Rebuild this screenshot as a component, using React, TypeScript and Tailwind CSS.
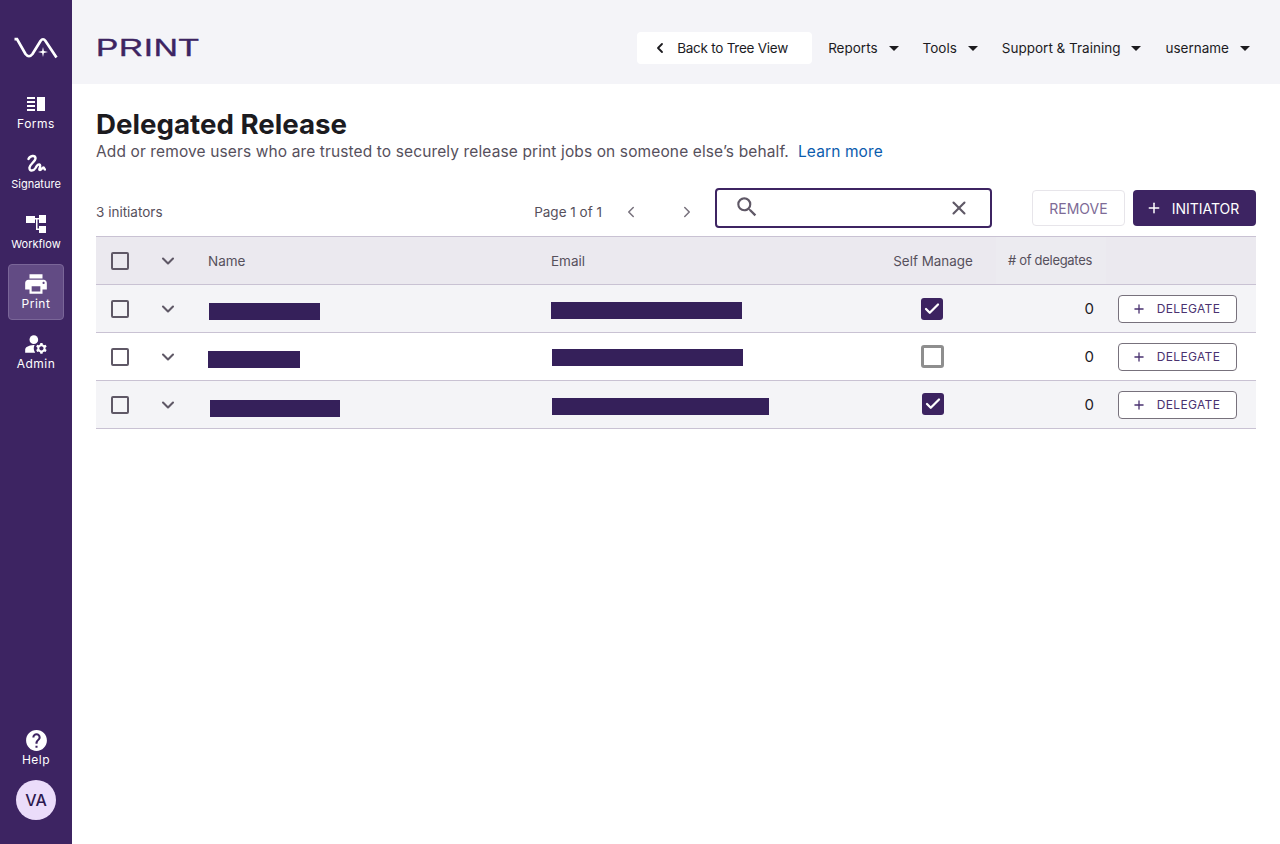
import { ChevronDown, ChevronLeft, ChevronRight, Plus, X, Check } from 'lucide-react'
import { MdPrint, MdHelp, MdManageAccounts, MdSearch } from 'react-icons/md'
import type { ReactNode } from 'react'

function FormsIcon() {
  return (
    <svg width="20" height="16" viewBox="0 0 20 16" fill="white">
      <rect x="1" y="1" width="8" height="2" />
      <rect x="1" y="5" width="8" height="2" />
      <rect x="1" y="9" width="8" height="2" />
      <rect x="1" y="13" width="8" height="2" />
      <rect x="11" y="1" width="8" height="14" />
    </svg>
  )
}

function SignatureIcon() {
  return (
    <svg width="20" height="20" viewBox="0 0 20 20" fill="none" stroke="white" strokeWidth="2.4" strokeLinecap="round" strokeLinejoin="round">
      <path d="M2.500 5C4 1.500 9 1 9.500 4C10 7 4 10 3.500 13.500C3 17.500 7.500 17.500 9.500 14C11 11 13 9.500 14 11C15 13 12 16 14 16C15.500 16 16 13.500 17.500 13.500C18.500 13.500 18 15.500 19 15.500" />
    </svg>
  )
}

function WorkflowIcon() {
  return (
    <svg width="20" height="18" viewBox="0 0 20 18" fill="white">
      <rect x="0" y="1" width="9" height="7" />
      <rect x="13" y="0" width="7" height="8" />
      <rect x="13" y="11" width="7" height="7" />
      <path d="M9 3h4v1.500h-1.500v9H13V15h-3V4.500H9z" />
    </svg>
  )
}

function VaLogo() {
  return (
    <svg width="46" height="22" viewBox="0 0 46 22" fill="none">
      <path d="M1.500 2.200H4L12.500 17Q16 21.500 19.500 17L27.500 4Q30 .5 32.500 4L43.500 20.500" stroke="white" strokeWidth="2.700" />
      <path d="M30 10L30.900 14.100L35 15L30.900 15.900L30 20L29.100 15.900L25 15L29.100 14.100Z" fill="white" />
    </svg>
  )
}

function NavItem({ icon, label, active, small }: { icon: ReactNode; label: string; active?: boolean; small?: boolean }) {
  return (
    <div className={`flex h-14 w-14 flex-col items-center rounded border pt-[9px] ${active ? 'border-[#7a6698] bg-[#624b84]' : 'border-transparent'}`}>
      <div className="flex h-5 items-center justify-center">{icon}</div>
      <span className={`mt-[2px] leading-4 text-white ${small ? 'text-[11px]' : 'text-[12px] tracking-[0.5px]'}`}>{label}</span>
    </div>
  )
}

function Caret() {
  return <span className="ml-[11px] h-0 w-0 border-x-[5px] border-t-[5px] border-x-transparent border-t-[#1c1b1f]" />
}

function MenuItem({ label }: { label: string }) {
  return (
    <div className="flex items-center text-[13.5px] text-[#1c1b1f]">
      {label}
      <Caret />
    </div>
  )
}

function Box({ color = 'border-[#5f5866]' }: { color?: string }) {
  return <div className={`h-[18px] w-[18px] rounded-[2px] border-2 ${color}`} />
}

function SelfBox({ checked, nudge }: { checked: boolean; nudge?: string }) {
  if (checked) {
    return (
      <div className={`flex h-[22px] w-[22px] items-center justify-center rounded-[3px] bg-[#3c2360] ${nudge}`}>
        <Check size={18} color="white" strokeWidth={3} />
      </div>
    )
  }
  return <div className="mr-[1px] h-[23px] w-[23px] rounded-[3px] border-[3px] border-[#8e8e8e]" />
}

const rows = [
  { nameW: 'w-[111px]', nameCls: 'mt-[6px] ml-[1px]', emailW: 'w-[191px]', emailCls: 'mt-[4px]', self: true, nudge: 'mr-[2px]', bg: 'bg-[#f4f4f7]' },
  { nameW: 'w-[92px]', nameCls: 'mt-[6px]', emailW: 'w-[191px]', emailCls: 'mt-[2px] ml-[1px]', self: false, nudge: '', bg: 'bg-white' },
  { nameW: 'w-[130px]', nameCls: 'mt-[8px] ml-[2px]', emailW: 'w-[217px]', emailCls: 'mt-[4px] ml-[1px]', self: true, nudge: 'mb-[2px]', bg: 'bg-[#f4f4f7]' },
]

const gridCols = 'grid grid-cols-[48px_48px_343px_343px_110px_118px_1fr] items-center'

export default function App() {
  return (
    <div className="flex min-h-[844px] bg-white font-['Inter',sans-serif]">
      {/* Sidebar */}
      <aside className="flex w-[72px] shrink-0 flex-col items-center bg-[#3d2462] pb-[24px]">
        <div className="flex h-[84px] w-full items-center justify-center pt-3">
          <VaLogo />
        </div>
        <div className="flex flex-col gap-1">
          <NavItem icon={<FormsIcon />} label="Forms" />
          <NavItem icon={<SignatureIcon />} label="Signature" small />
          <NavItem icon={<WorkflowIcon />} label="Workflow" small />
          <NavItem icon={<MdPrint size={26} color="white" />} label="Print" active />
          <NavItem icon={<MdManageAccounts size={26} color="white" />} label="Admin" />
        </div>
        <div className="mt-auto flex flex-col items-center">
          <NavItem icon={<MdHelp size={25} color="white" />} label="Help" />
          <div className="mt-1 flex h-10 w-10 items-center justify-center rounded-full bg-[#ebdcfa] text-base font-medium text-[#2e1a4f]">VA</div>
        </div>
      </aside>

      <div className="min-w-0 flex-1">
        {/* Header */}
        <header className="flex h-[84px] items-center justify-between bg-[#f4f4f8] pl-6 pr-[30px] pt-3">
          <span className="origin-left scale-x-[1.45] font-['Liberation_Sans',sans-serif] text-[23px] leading-none tracking-[0.5px] text-[#3d2462] [-webkit-text-stroke:0.4px_#3d2462]">PRINT</span>
          <div className="flex items-center">
            <div className="flex h-8 w-[175px] items-center rounded bg-white pl-[15px] text-[13.5px] tracking-[-0.25px] text-[#1c1b1f]">
              <ChevronLeft size={16} strokeWidth={2.75} className="mr-[9px]" />
              Back to Tree View
            </div>
            <div className="ml-4 flex items-center gap-6">
              <MenuItem label="Reports" />
              <MenuItem label="Tools" />
              <MenuItem label="Support & Training" />
              <MenuItem label="username" />
            </div>
          </div>
        </header>

        <main className="px-6">
          <h1 className="mt-[22px] text-[27.7px] font-bold leading-[36px] text-[#1c1b1f]">Delegated Release</h1>
          <p className="text-[15.5px] leading-[20px] tracking-[0.12px] text-[#56505c]">
            Add or remove users who are trusted to securely release print jobs on someone else’s behalf.
            <span className="ml-[9px] text-[#0b5cad]">Learn more</span>
          </p>

          {/* Toolbar */}
          <div className="mt-[26px] flex h-10 items-center">
            <span className="pt-[8px] text-[13.5px] text-[#56505c]">3 initiators</span>
            <span className="ml-auto pt-[8px] text-[13.5px] text-[#56505c]">Page 1 of 1</span>
            <ChevronLeft size={18} className="ml-5 mt-[8px] text-[#77717c]" />
            <ChevronRight size={18} className="ml-[38px] mr-[-1px] mt-[8px] text-[#77717c]" />
            <div className="ml-5 flex h-10 w-[277px] items-center rounded border-2 border-[#3d2462] bg-white pl-[17px] pr-[20px]">
              <MdSearch size={26} className="mt-[-2px] text-[#5f5866]" />
              <X size={22} strokeWidth={2.25} className="ml-auto text-[#5f5866]" />
            </div>
            <div className="ml-10 flex h-9 w-[93px] items-center justify-center rounded border border-[#e7e5ea] text-[14px] text-[#7d6b96]">REMOVE</div>
            <div className="ml-2 flex h-9 w-[123px] items-center justify-center rounded bg-[#3d2462] pr-[4px] text-[14px] text-white">
              <Plus size={16} strokeWidth={2.25} className="mr-[10px]" />
              INITIATOR
            </div>
          </div>

          {/* Table */}
          <div className="mt-2 border-t border-[#c9c2d3]">
            <div className={`${gridCols} h-12 border-b border-[#c9c2d3] bg-[#ebe9ef] text-[13.5px] text-[#56505c]`}>
              <div className="flex justify-center"><Box /></div>
              <div className="flex justify-center"><ChevronDown size={20} strokeWidth={2.5} className="text-[#5f5866]" /></div>
              <div className="pl-4 pt-[1px]">Name</div>
              <div className="pl-4 pt-[1px]">Email</div>
              <div className="pt-[1px] text-center text-[13.4px]">Self Manage</div>
              <div className="ml-2 flex h-full items-center justify-end bg-[#ecebf0] pr-[14px] text-[13px] tracking-[-0.3px]">
                <span className="whitespace-nowrap">#&nbsp;of delegates</span>
              </div>
              <div />
            </div>
            {rows.map((row, i) => (
              <div key={i} className={`${gridCols} h-12 border-b border-[#c9c2d3] ${row.bg}`}>
                <div className="flex justify-center"><Box /></div>
                <div className="flex justify-center"><ChevronDown size={20} strokeWidth={2.5} className="text-[#5f5866]" /></div>
                <div className="pl-4">
                  <div className={`h-[17px] bg-[#35205a] ${row.nameW} ${row.nameCls}`} />
                </div>
                <div className="pl-4">
                  <div className={`h-[17px] bg-[#35205a] ${row.emailW} ${row.emailCls}`} />
                </div>
                <div className="flex justify-center"><SelfBox checked={row.self} nudge={row.nudge} /></div>
                <div className="pr-3 pt-[1px] text-right text-[15px] text-[#1c1b1f]">0</div>
                <div className="pl-3">
                  <div className="flex h-7 w-[119px] items-center justify-center rounded border border-[#77717c] bg-white pr-[3px] pt-[1px] text-[12px] tracking-[0.35px] text-[#4a3270]">
                    <Plus size={14} strokeWidth={2.25} className="mr-[11px]" />
                    DELEGATE
                  </div>
                </div>
              </div>
            ))}
          </div>
        </main>
      </div>
    </div>
  )
}
